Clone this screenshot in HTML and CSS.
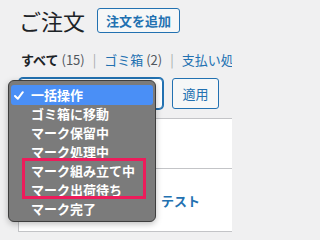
FILE: index.html
```html
<!DOCTYPE html>
<html lang="ja">
<head>
<meta charset="utf-8">
<title>ご注文</title>
<link rel="stylesheet" href="styles.css">
</head>
<body>
<div class="wrap">
  <div class="title-row">
    <h1 class="heading">ご注文</h1>
    <a class="title-action" href="#">注文を追加</a>
  </div>
  <div class="subsubsub">
    <span class="current">すべて</span> <span class="count">(15)</span><span class="sep">|</span><a href="#">ゴミ箱</a> <span class="count">(2)</span><span class="sep">|</span><a href="#">支払い処理中</a> <span class="count">(3)</span>
  </div>
  <div class="tablenav">
    <div class="select"></div>
    <button class="apply">適用</button>
  </div>
  <div class="table">
    <div class="thead"></div>
    <div class="row"><a class="title-link" href="#">テスト</a></div>
  </div>
</div>
<div class="menu">
  <div class="item selected">
    <svg class="check" width="10" height="9" viewBox="0 0 10 9"><polyline points="1,5 3.8,7.8 8.8,1.2" fill="none" stroke="#fff" stroke-width="2" stroke-linecap="round" stroke-linejoin="round"/></svg>
    一括操作
  </div>
  <div class="item">ゴミ箱に移動</div>
  <div class="item">マーク保留中</div>
  <div class="item">マーク処理中</div>
  <div class="item">マーク組み立て中</div>
  <div class="item">マーク出荷待ち</div>
  <div class="item">マーク完了</div>
</div>
<div class="mark"></div>
</body>
</html>
```
FILE: styles.css
```css
html, body {
  margin: 0;
  padding: 0;
  overflow: hidden;
}
body {
  background: #f0f0f1;
  font-family: "Noto Sans CJK JP", "Noto Sans", sans-serif;
  color: #1d2327;
  width: 232px;
  height: 234px;
  position: relative;
}
.wrap {
  width: 420px;
  padding-left: 18px;
}
.title-row {
  display: flex;
  align-items: center;
  padding-top: 8px;
  height: 25px;
}
.heading {
  margin: 0 0 0 1px;
  font-size: 22px;
  font-weight: 400;
  line-height: 25px;
}
.title-action {
  margin-left: 12px;
  box-sizing: border-box;
  height: 25px;
  padding: 0 8px;
  border: 1px solid #2271b1;
  border-radius: 3px;
  background: #f6f7f7;
  color: #2271b1;
  font-size: 13px;
  font-weight: 700;
  line-height: 23px;
  text-decoration: none;
}
.subsubsub {
  margin-top: 17px;
  padding-left: 3px;
  white-space: nowrap;
  font-size: 13px;
  line-height: 20px;
  color: #50575e;
}
.subsubsub .current {
  font-weight: 700;
  color: #1d2327;
}
.subsubsub a {
  color: #2271b1;
  text-decoration: none;
}
.sep {
  color: #a7aaad;
  margin: 0 8px;
}
.tablenav {
  display: flex;
  margin-top: 8px;
}
.select {
  box-sizing: border-box;
  width: 144px;
  height: 31px;
  margin-left: 1px;
  border: 1px solid #2271b1;
  box-shadow: 0 0 0 1px #2271b1;
  border-radius: 4px;
  background: #fff;
}
.apply {
  box-sizing: border-box;
  width: 47px;
  height: 31px;
  margin-left: 9px;
  border: 1px solid #2271b1;
  border-radius: 3px;
  background: #f6f7f7;
  color: #2271b1;
  font-family: inherit;
  font-size: 13px;
  padding: 0;
}
.table {
  margin-top: 9px;
  border: 1px solid #c3c4c7;
  border-right: none;
  background: #fff;
}
.thead {
  height: 49px;
  border-bottom: 1px solid #c3c4c7;
}
.row {
  padding: 20px 0 20px 142px;
  line-height: 20px;
}
.title-link {
  color: #2271b1;
  font-size: 13px;
  font-weight: 700;
  text-decoration: none;
}
.menu {
  position: absolute;
  left: 8px;
  top: 80px;
  box-sizing: border-box;
  width: 148px;
  height: 142px;
  padding: 4px 2px 0;
  background: #7b7b7b;
  border: 1px solid #3e3e3e;
  border-radius: 6px;
  box-shadow: 0 2px 6px rgba(0, 0, 0, 0.25);
}
.item {
  position: relative;
  height: 19px;
  padding-left: 20px;
  color: #fff;
  font-size: 13px;
  font-weight: 700;
  line-height: 19px;
  white-space: nowrap;
}
.item.selected {
  background: #4a8ff6;
  border-radius: 3px;
  height: 20px;
  line-height: 20px;
  margin-bottom: -1px;
}
.check {
  position: absolute;
  left: 3px;
  top: 6px;
}
.mark {
  position: absolute;
  left: 22px;
  top: 158px;
  box-sizing: border-box;
  width: 124px;
  height: 41px;
  border: 3px solid #ec1c5b;
}
```
